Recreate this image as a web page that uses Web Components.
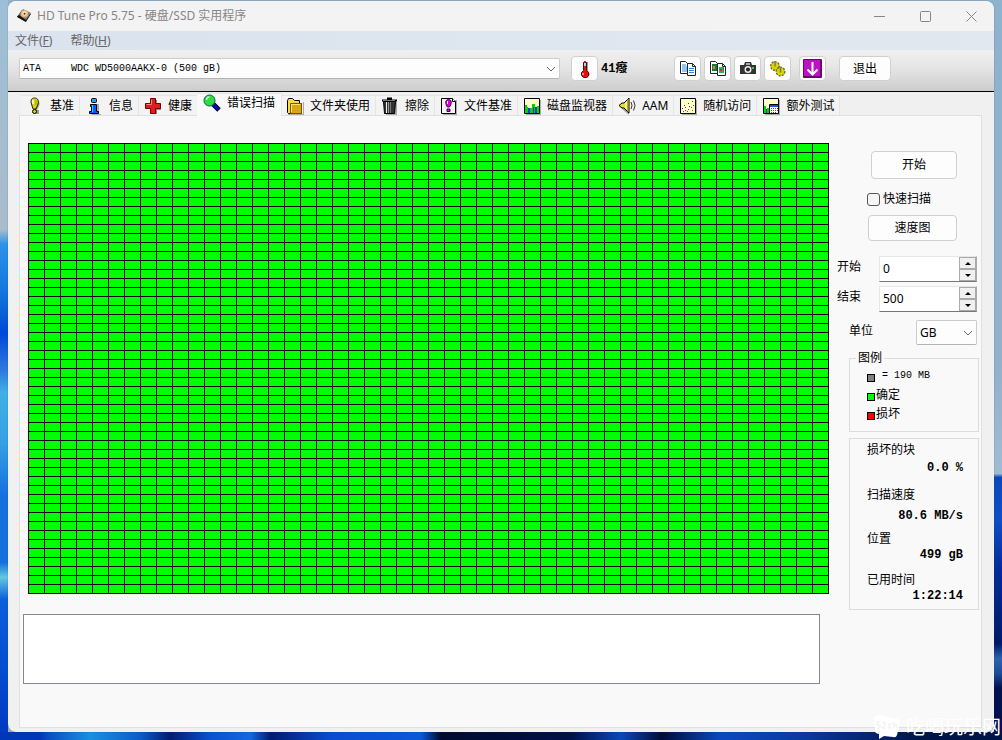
<!DOCTYPE html>
<html lang="zh-CN">
<head>
<meta charset="utf-8">
<title>HD Tune Pro 5.75 - 硬盘/SSD 实用程序</title>
<style>
  html, body { height: 100%; }
  body {
    margin: 0;
    color: #000;
    font: 12px/16px "Noto Sans", "Noto Sans CJK SC", sans-serif;
    --mono: "Liberation Mono", "Noto Sans CJK SC", monospace;
  }
</style>
</head>
<body>
<hd-desktop>
  <hd-window>
    <hd-titlebar slot="title">HD Tune Pro 5.75 - 硬盘/SSD 实用程序</hd-titlebar>
    <hd-menubar slot="menu"></hd-menubar>
    <hd-toolbar slot="toolbar"></hd-toolbar>
    <hd-tabs>
      <hd-tab slot="tab" icon="bulb">基准</hd-tab>
      <hd-tab slot="tab" icon="info">信息</hd-tab>
      <hd-tab slot="tab" icon="cross">健康</hd-tab>
      <hd-tab slot="tab" icon="lens" active>错误扫描</hd-tab>
      <hd-tab slot="tab" icon="folder">文件夹使用</hd-tab>
      <hd-tab slot="tab" icon="trash">擦除</hd-tab>
      <hd-tab slot="tab" icon="filebench">文件基准</hd-tab>
      <hd-tab slot="tab" icon="monitor">磁盘监视器</hd-tab>
      <hd-tab slot="tab" icon="speaker">AAM</hd-tab>
      <hd-tab slot="tab" icon="scatter">随机访问</hd-tab>
      <hd-tab slot="tab" icon="extra">额外测试</hd-tab>
      <hd-scan></hd-scan>
    </hd-tabs>
  </hd-window>
  <hd-badge slot="badge">吃喝玩乐网</hd-badge>
</hd-desktop>

<script>
const define = (name, html, setup) => {
  const template = document.createElement('template');
  template.innerHTML = html;
  customElements.define(name, class extends HTMLElement {
    constructor() {
      super();
      this.attachShadow({ mode: 'open' }).append(template.content.cloneNode(true));
    }
    connectedCallback() {
      if (setup && !this.ready) { this.ready = true; setup(this, this.shadowRoot); }
    }
  });
};

const ICONS = {
  app: '<path d="M1 10 6 3l9 4-5 8z" fill="#222"/><path d="M2 9 7 2l8 4-5 7z" fill="#777"/><circle cx="8.5" cy="6.8" r="3.8" fill="#e8b070"/><circle cx="8.5" cy="6.5" r="2.2" fill="#ffe9c0"/><circle cx="8.5" cy="6.8" r="1" fill="#333"/><path d="M1 9.500 3 8l6 4.500L10 15z" fill="#111"/>',
  bulb: '<path d="M10 3c4 0 4 4 3 6l-2 4h2v4H9z" fill="#999"/><path d="M8.500 1C5 1 4.500 4 5.500 7L7 12h3l2-5c1-3 0-6-3.500-6z" fill="#d8d800" stroke="#222"/><path d="M7 3v4" stroke="#fff" stroke-width="1.500"/><path d="M10 3v5" stroke="#a8a800"/><circle cx="8.500" cy="14.500" r="2" fill="#d8d800" stroke="#000"/>',
  info: '<path d="M7 17h9v1H6zM12 7h2v9h-2z" fill="#aaa"/><rect x="6.500" y="1.500" width="5" height="4" rx="1" fill="#0af" stroke="#000"/><path d="M5.500 7.500h6v7h2v2h-9v-2h2v-5h-1z" fill="#0060ff" stroke="#000"/><path d="M7.500 8v7" stroke="#40c8ff"/>',
  cross: '<path d="M8 3h5v4h4v6h-4v4H8z" fill="#888"/><path d="M6.500 1.500h5v5h5v5h-5v5h-5v-5h-5v-5h5z" fill="#e01c1c" stroke="#700000"/><path d="M7.500 2.500v5h-5" fill="none" stroke="#ff8080"/>',
  lens: '<path d="m10 10 6 6" stroke="#000" stroke-width="5"/><path d="m10 10 5.500 5.500" stroke="#0010c8" stroke-width="3"/><circle cx="6.500" cy="6.500" r="5.500" fill="#30dc40" stroke="#064"/><path d="M3.500 6c0-2 1-3 3-3" fill="none" stroke="#c0ffd0" stroke-width="1.500"/>',
  folder: '<path d="M2 17h15V5h1v13H2z" fill="#aaa"/><path d="M1.500 15.500v-12l1-2h4l2 2h5v3h2v10h-13z" fill="#f5dc40" stroke="#000"/><path d="M4.500 6.500h11v10h-11z" fill="#d9a513" stroke="#765400"/><path d="M5.500 15V7.500H14" fill="none" stroke="#ffe870"/>',
  trash: '<path d="M4 5h12v13H5z" fill="#aaa"/><path d="M2.500 4.500h12l-1 12h-10z" fill="#333" stroke="#000"/><path d="M5.500 5v11" stroke="#eee"/><path d="M7.500 5v11" stroke="#999"/><path d="M9.500 5v11" stroke="#777"/><path d="M1 3.500h15M6 1.500h5" stroke="#000" stroke-width="2"/><path d="M2 3.500h12" stroke="#777"/>',
  filebench: '<path d="M3 3h14v15H3z" fill="#aaa"/><path d="M1.500 1.500h11l3 3v12h-14z" fill="#f5f5f5" stroke="#000"/><path d="M12.500 1.500v3h3" fill="#fff" stroke="#000"/><path d="M8.500 2.500c-4 0-3 5-1 7.500h2c2-2.500 3-7.500-1-7.500z" fill="#d800d8" stroke="#400040"/><path d="M7.500 4v3" stroke="#fff"/><path d="M7 12h3v2.500H7z" fill="#d800d8" stroke="#400040"/>',
  monitor: '<path d="M3 3h15v15H3z" fill="#aaa"/><path d="M1.500 1.500h15v15h-15z" fill="#ffffc8" stroke="#000"/><path d="M2 8h2v2h1v6H2zM7 11h2V7h3v9H7zM14 9h2v7h-2z" fill="#00d800"/><path d="M5 11h2v5H5zM10 10h1v6h-1zM12 10h2v6h-2z" fill="#3030e8"/>',
  speaker: '<path d="M2 10 11 18V14z" fill="#999"/><path d="M1 8.500 4 6h2l5-5v15l-5-5H4z" fill="#e8e020" stroke="#000"/><path d="M8 5v7" stroke="#fff"/><path d="M10 2v13" stroke="#8a8500"/><path d="M13 5q2 3.500 0 7M15.500 3.500q3 5 0 10" fill="none" stroke="#333"/>',
  scatter: '<path d="M3 3h15v15H3z" fill="#aaa"/><path d="M1.500 1.500h15v15h-15z" fill="#ffffc8" stroke="#000"/><path d="M3 11h1v1H3zM5 8h1v1H5zM6 10h1v1H6zM9 6h1v1H9zM10 9h1v1h-1zM13 4h1v1h-1z" fill="#22f"/><path d="M4 14h1v1H4zM6 13h1v1H6zM9 12h1v1H9zM12 10h1v1h-1zM14 8h1v1h-1zM13 13h1v1h-1zM8 14h1v1H8z" fill="#e22"/>',
  extra: '<path d="M3 3h15v15H3z" fill="#aaa"/><path d="M1.500 1.500h15v15h-15z" fill="#ffffc8" stroke="#000"/><path d="M2 9h2v7H2zM5 11h2v5H5z" fill="#00d800"/><path d="M4 12h1v4H4z" fill="#33f"/><path d="M7.500 7.500h9v9h-9z" fill="#fff" stroke="#000"/><path d="M8 8h8v2H8z" fill="#24f"/><path d="M9 11.500h7M9 13.500h7M9 15.500h5" stroke="#844" stroke-dasharray="1 1"/>',
  thermo: '<path d="M10 2h2v9l2 3-2 4H9z" fill="#999"/><path d="M7.500 10.500v-8q1.500-2 3 0v8l2 2v3l-2 2h-3l-2-2v-3z" fill="#e81010" stroke="#500"/><path d="M8 3h2v3H8z" fill="#7ee"/><path d="M7 13v2" stroke="#fff"/>',
  copy: '<path d="M1.500 1.500h5l3 3v9h-8z" fill="#fff" stroke="#222"/><path d="M3 5h4M3 7h5M3 9h5M3 11h5" stroke="#28e"/><path d="M8.500 3.500h5l3 3v9h-8z" fill="#fff" stroke="#222"/><path d="M13.500 3.500v3h3" fill="none" stroke="#222"/><path d="M10 8.500h5M10 10.500h5M10 12.500h5" stroke="#28e"/>',
  copyimg: '<path d="M1.500 1.500h5l3 3v9h-8z" fill="#fff" stroke="#222"/><path d="M3 4h5v7H3z" fill="#174"/><path d="M4 6h2v3H4z" fill="#f71"/><path d="M8.500 3.500h5l3 3v9h-8z" fill="#fff" stroke="#222"/><path d="M13.500 3.500v3h3" fill="none" stroke="#222"/><path d="M10 7h5v6h-5z" fill="#2b4"/><path d="M11 9h2v2h-2z" fill="#e22"/><path d="M14 8h1v4h-1z" fill="#27c"/>',
  camera: '<path d="M1 5h4l1-3h6l1 3h4v9H1z" fill="#333"/><path d="M7 3h4v2H7z" fill="#aaa"/><circle cx="9" cy="9.500" r="3.500" fill="#eee"/><circle cx="9" cy="9.500" r="2" fill="#222"/><path d="M13 7h2v2h-2z" fill="#2c4"/>',
  coins: '<g fill="#d9d500" stroke="#77700a"><circle cx="6" cy="6" r="4" stroke-dasharray="2 1" stroke-width="2"/><circle cx="6" cy="6" r="3.500" stroke="none"/><circle cx="11.500" cy="11.500" r="4" stroke-dasharray="2 1" stroke-width="2"/><circle cx="11.500" cy="11.500" r="3.500" stroke="none"/></g><path d="M6 1v5.500M11.500 7v5.500" stroke="#777" stroke-width="1.500"/>',
  down: '<rect width="19" height="19" rx="1" fill="#720078"/><path d="M1 1h16v16H1z" fill="#bb12c2"/><path d="M9.500 3v12M4.500 10.500l5 5 5-5" fill="none" stroke="#fff" stroke-width="2"/>'
};

define('hd-icon', `<style>:host{display:block;width:18px;height:18px;flex:none}:host([name=down]){width:19px;height:19px}svg{display:block;width:100%;height:100%}</style>
<svg viewBox="0 0 18 18" aria-hidden="true"></svg>`, (el, root) => {
  const name = el.getAttribute('name');
  const svg = root.querySelector('svg');
  if (name === 'down') svg.setAttribute('viewBox', '0 0 19 19');
  svg.innerHTML = ICONS[name] || '';
});

define('hd-desktop', `<style>
:host{display:flex;flex-direction:column;position:relative;box-sizing:border-box;min-height:100vh;padding:1px 8px 8px;overflow:hidden;
 background:
 linear-gradient(90deg,#0036b8 0 4%,#0a50c4 5%,#1a90e0 9%,#0a5cc8 14%,#021c70 17%,#0a50d0 21%,#1467e0 25%,#021c70 27%,#0a4cd0 33%,#0a58d8 42%,#000a30 44%,#001048 57%,#0a48b8 62%,#000c38 66%,#0a48c0 72%,#0a3aa0 80%,#001448 92%) bottom/100% 8px no-repeat,
 linear-gradient(180deg,#9dbfd6 0,#a9bccb 31%,#2b93e8 33%,#1478e0 39%,#0a62d8 42%,#0048d8 45%,#2e78e0 50%,#3fb0e6 53%,#35a0e4 60%,#1470e0 67%,#1470dc 76%,#64c8e0 78%,#0a60dc 81%,#0038c0 100%) left/8px 100% no-repeat,
 linear-gradient(180deg,#8fb2cd 0,#93b1c9 50%,#a0bcd2 64%,#0a48b8 64.5%,#0c50c8 70%,#002c98 77%,#001a68 87%,#2a64b0 89%,#1c4c98 91%,#001150 93%) right/8px 100% no-repeat,
 #8fb2cd}
</style><slot></slot><slot name="badge"></slot>`);

define('hd-window', `<style>
:host{display:flex;flex:1;flex-direction:column;overflow:hidden;border-radius:8px;background:#f0f0f0;box-shadow:0 0 1px #345}
</style><slot name="title"></slot><slot name="menu"></slot><slot name="toolbar"></slot><slot></slot>`);

define('hd-titlebar', `<style>
:host{display:flex;align-items:center;height:30px;padding-left:8px;gap:3px;background:#f3f3f3;color:#868686}
h1{flex:1;margin:0;font:inherit}
div{display:flex}
button{width:46px;height:30px;padding:0;border:0;background:none;display:grid;place-items:center}
svg{display:block;fill:none;stroke:#868686}
</style><hd-icon name="app"></hd-icon><h1><slot></slot></h1>
<div>
<button aria-label="最小化"><svg width="11" height="11"><path d="M0 5.500h11"/></svg></button>
<button aria-label="最大化"><svg width="11" height="11"><rect x=".5" y=".5" width="10" height="10" rx="1"/></svg></button>
<button aria-label="关闭"><svg width="11" height="11"><path d="m.5.500 10 10m0-10-10 10"/></svg></button></div>`);

define('hd-menubar', `<style>
:host{display:flex;align-items:center;height:19px;padding-left:7px;gap:18px;background:linear-gradient(90deg,#dae3ee,#e1e8f0)}
button{padding:0;border:0;background:none;color:#666;font:inherit}
</style><button>文件(<u>F</u>)</button><button>帮助(<u>H</u>)</button>`);

define('hd-select', `<style>
:host{display:grid;align-items:center}
select,svg{grid-area:1/1}
select{appearance:none;box-sizing:border-box;width:100%;height:100%;margin:0;padding:0 20px 0 3px;border:1px solid #ccc;border-radius:2px;border-bottom-color:#b4b4b4;background:#fdfdfd;color:#000;font:inherit}
svg{justify-self:end;margin-right:4px;fill:none;stroke:#666;pointer-events:none}
</style><select></select><svg width="10" height="6"><path d="m1 1 4 4 4-4"/></svg>`, (el, root) => {
  const select = root.querySelector('select');
  select.setAttribute('aria-label', el.getAttribute('label'));
  select.append(new Option(el.getAttribute('value').replace(/ /g, '\u00a0')));
});

define('hd-button', `<style>
:host{display:block}
button{box-sizing:border-box;display:grid;place-items:center;width:100%;height:100%;margin:0;padding:0;border:1px solid #d0d0d0;border-radius:4px;background:#fdfdfd;color:#000;font:inherit}
</style><button><slot></slot></button>`, (el, root) => {
  if (el.title) root.querySelector('button').setAttribute('aria-label', el.title);
});

define('hd-toolbar', `<style>
:host{display:flex;align-items:center;box-sizing:border-box;height:42px;padding:0 103px 4px 11px;border-bottom:1px solid #000;background:linear-gradient(#f0f0f0,#e6e6e6 40%,#cdcdcd)}
hd-select{flex:1;height:21px;font:10px/16px var(--mono)}
.temp{width:27px;height:25px;margin-left:11px}
output{flex:none;width:73px;margin-left:3px;font:bold 12px/16px var(--mono)}
.tools{display:flex;gap:3px}
.tools hd-button{width:27px;height:25px}
.save{width:27px;height:25px;margin-left:8px}
.exit{width:52px;height:25px;margin-left:13px}
</style>
<hd-select label="硬盘" value="ATA     WDC WD5000AAKX-0 (500 gB)"></hd-select>
<hd-button class="temp" title="温度"><hd-icon name="thermo"></hd-icon></hd-button>
<output>41癈</output>
<div class="tools">
<hd-button title="复制文本"><hd-icon name="copy"></hd-icon></hd-button>
<hd-button title="复制图像"><hd-icon name="copyimg"></hd-icon></hd-button>
<hd-button title="截图"><hd-icon name="camera"></hd-icon></hd-button>
<hd-button title="选项"><hd-icon name="coins"></hd-icon></hd-button></div>
<hd-button class="save" title="保存"><hd-icon name="down"></hd-icon></hd-button>
<hd-button class="exit">退出</hd-button>`);

define('hd-tab', `<style>
:host{display:block;margin-top:2px}
button{display:flex;align-items:center;gap:6px;box-sizing:border-box;height:20px;margin:0;padding:0 5px;border:1px solid #e5e5e5;border-width:1px 1px 0 0;background:#f3f3f3;color:#000;font:inherit;white-space:nowrap}
:host([active]){margin:0 -1px 0 -1px;z-index:1}
:host([active]) button{height:23px;padding:0 6px 4px;background:#f9f9f9}
</style><button role="tab"><slot></slot></button>`, (el, root) => {
  const icon = document.createElement('hd-icon');
  icon.setAttribute('name', el.getAttribute('icon'));
  const button = root.querySelector('button');
  button.prepend(icon);
  button.setAttribute('aria-selected', el.hasAttribute('active'));
});

define('hd-tabs', `<style>
:host{display:flex;flex:1;flex-direction:column;padding:1px 12px 4px 11px}
nav{display:flex;height:22px;padding-left:2px}
section{flex:1;border:1px solid #e0e0e0;background:#f9f9f9}
</style><nav role="tablist"><slot name="tab"></slot></nav><section><slot></slot></section>`);

define('hd-blocks', `<style>
:host{display:grid;grid-template-columns:repeat(50,1fr);grid-auto-rows:8px;gap:1px;padding:1px;background:#000}
i{background:#0f0}
</style>`, (el, root) => {
  for (let n = 0; n < 2500; n++) root.append(document.createElement('i'));
});

define('hd-number', `<style>
:host{display:flex;align-items:center;justify-content:space-between}
label{padding-bottom:4px}
div{display:grid;grid-template:12px 12px/79px 16px;box-sizing:border-box;width:98px;height:26px;border:1px solid #e6e6e6;border-right-color:#aaa;border-bottom-color:#777;background:#fff}
input{grid-row:1/3;min-width:0;margin:0;padding:0 3px;border:0;background:none;color:#000;font:inherit;outline:0}
button{display:grid;place-items:center;box-sizing:border-box;width:17px;height:12px;padding:0;border:1px solid #aaa;background:#f0f0f0}
svg{display:block}
</style><label for="n"><slot></slot></label><div><input id="n" type="text" inputmode="numeric">
<button aria-label="增加"><svg width="6" height="3"><path d="m0 3 3-3 3 3z"/></svg></button>
<button aria-label="减少"><svg width="6" height="3"><path d="m0 0 3 3 3-3z"/></svg></button></div>`, (el, root) => {
  root.querySelector('input').value = el.getAttribute('value');
});

define('hd-legend', `<style>
:host{display:block}
fieldset{box-sizing:border-box;height:82px;margin:0;padding:0 0 0 17px;border:1px solid #dcdcdc}
legend{margin-left:-11px;padding:0 2px}
ul{margin:0;padding:0;list-style:none}
li{display:flex;align-items:end;height:19px;gap:1px}
li::before{content:"";box-sizing:border-box;width:8px;height:8px;margin-bottom:3px;border:1px solid #000;background:var(--c)}
span{line-height:16px;padding-bottom:1px}
.size{padding-left:6px;font:10px/16px var(--mono)}
</style><fieldset><legend>图例</legend><ul>
<li style="--c:#808080"><span class="size">= 190 MB</span></li>
<li style="--c:#0f0"><span>确定</span></li>
<li style="--c:#f00"><span>损坏</span></li></ul></fieldset>`);

define('hd-stats', `<style>
:host{display:block;box-sizing:border-box;height:172px;border:1px solid #dcdcdc;padding:1px 15px 0 17px}
dl{display:grid;grid-template-rows:18px 18px 27px 21px 23px 16px 25px 16px;align-items:end;margin:0}
dd{margin:0;text-align:right;font:bold 12px/16px var(--mono)}
</style><dl><dt>损坏的块</dt><dd>0.0 %</dd><dt>扫描速度</dt><dd>80.6 MB/s</dd><dt>位置</dt><dd>499 gB</dd><dt>已用时间</dt><dd>1:22:14</dd></dl>`);

define('hd-scan', `<style>
:host{display:flex;gap:8px;padding:0 2px 8px 3px}
main{flex:1;min-width:0;padding-top:27px}
hd-blocks{margin-left:5px}
textarea{display:block;box-sizing:border-box;width:calc(100% - 9px);height:70px;margin:20px 0 0;border:1px solid #828790;border-radius:0;background:#fff;resize:none;outline:0}
aside{display:flex;flex:none;flex-direction:column;width:142px;padding-top:35px}
.start{align-self:end;width:86px;height:28px;margin-right:22px}
.quick{display:flex;align-items:center;align-self:end;gap:3px;height:16px;margin:12px 48px 8px 0}
.quick input{appearance:none;box-sizing:border-box;width:13px;height:13px;margin:0;border:1px solid #555;border-radius:3px;background:#f6f6f6}
.map{align-self:end;width:89px;height:26px;margin:0 22px 15px 0}
hd-number{margin:0 2px 4px 0}
.unit{display:flex;align-items:center;justify-content:space-between;height:25px;margin:4px 2px 5px 12px}
.unit span{padding-bottom:4px}
.unit hd-select{width:61px;height:25px}
hd-legend,hd-stats{margin-left:12px}
hd-stats{margin-top:6px}
</style>
<main><hd-blocks></hd-blocks><textarea aria-label="日志" readonly></textarea></main>
<aside>
<hd-button class="start">开始</hd-button>
<label class="quick"><input type="checkbox">快速扫描</label>
<hd-button class="map">速度图</hd-button>
<hd-number value="0">开始</hd-number>
<hd-number value="500">结束</hd-number>
<div class="unit"><span>单位</span><hd-select label="单位" value="GB"></hd-select></div>
<hd-legend></hd-legend>
<hd-stats></hd-stats>
</aside>`);

define('hd-badge', `<style>
:host{display:flex;align-items:center;gap:3px;position:absolute;right:1px;bottom:0;height:26px;color:#fff;font-size:19px;line-height:24px;white-space:nowrap;pointer-events:none}
svg{display:block}
</style><svg width="30" height="26" aria-hidden="true"><path d="M5 1 25 5q3 1 2 4l-3 12q-1 3-4 2l-9-1-5 3v-5q-5-1-4-4L1 4q1-3 4-3z" fill="#fff"/><path d="M7 8H4v3h3v3H4M9 9l3-1v3l-3 3h4M19 10h-3v4h3M21 8v6M21 11h3v3" fill="none" stroke="#eee"/></svg><slot></slot>`);
</script>
</body>
</html>
